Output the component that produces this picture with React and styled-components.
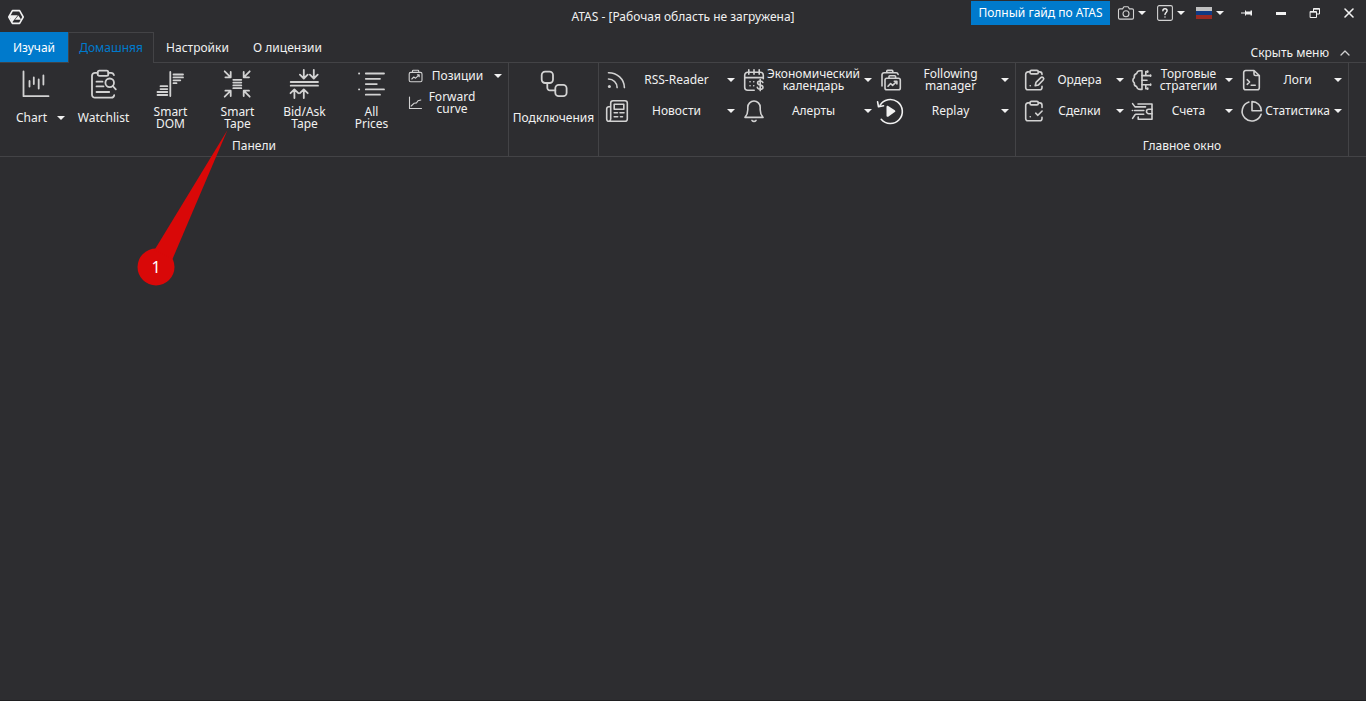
import React from "react";
import styled, { createGlobalStyle, css } from "styled-components";

const GlobalStyle = createGlobalStyle`
  * {
    box-sizing: border-box;
  }

  body {
    margin: 0;
    background: #2d2d30;
  }

  button {
    margin: 0;
    padding: 0;
    border: 0;
    background: none;
    color: inherit;
    font: inherit;
    cursor: pointer;
  }
`;

const Window = styled.div`
  position: relative;
  display: flex;
  flex-direction: column;
  min-height: 100vh;
  color: #f1f1f1;
  background: #2d2d30;
  border-bottom: 1px solid #1f1f21;
  font-family: "Noto Sans", "Open Sans", sans-serif;
  font-size: 12px;
  line-height: 12px;
`;

const TitleBar = styled.header`
  display: grid;
  grid-template-columns: 1fr auto 1fr;
  height: 32px;
`;

const Brand = styled.div`
  display: flex;
  align-items: center;
  padding-left: 8px;
`;

const Title = styled.h1`
  margin: 0;
  font-size: 12px;
  font-weight: 400;
  line-height: 33px;
  white-space: nowrap;
`;

const TitleActions = styled.div`
  display: flex;
  justify-content: flex-end;
  align-items: center;
  height: 26px;
`;

const GuideLink = styled.a`
  width: 139px;
  height: 24px;
  margin-right: 3px;
  color: #fff;
  background: #007acc;
  line-height: 24px;
  text-align: center;
  text-decoration: none;
  white-space: nowrap;
`;

const MenuButton = styled.button`
  display: flex;
  align-items: center;
  gap: 4px;
  width: 34px;
  height: 24px;
  margin-left: 5px;
`;

const WindowButton = styled.button`
  display: flex;
  justify-content: center;
  align-items: center;
  width: 34px;
  height: 24px;
`;

const TabBar = styled.nav`
  display: flex;
  height: 31px;
  border-bottom: 1px solid #434346;
`;

const Tab = styled.button`
  flex: none;
  width: ${(props) => props.$width}px;
  height: 30px;
  padding-top: 2px;
  line-height: 28px;
  text-align: center;
  white-space: nowrap;

  ${(props) =>
    props.$accent &&
    css`
      color: #fff;
      background: #007acc;
    `}

  ${(props) =>
    props.$active &&
    css`
      height: 31px;
      padding-top: 0;
      color: #007acc;
      background: #2d2d30;
      border: 1px solid #434346;
      border-bottom: 0;
    `}
`;

const HideMenu = styled.button`
  display: flex;
  align-items: center;
  gap: 11px;
  height: 16px;
  margin: 13px 16px 0 auto;
  white-space: nowrap;
`;

const Ribbon = styled.div`
  display: flex;
  height: 94px;
  border-bottom: 1px solid #434346;
`;

const Group = styled.section`
  display: flex;
  flex-direction: column;
  flex: none;
  width: ${(props) => props.$width}px;
  border-right: 1px solid #434346;
`;

const GroupBody = styled.div`
  display: flex;
  flex: 1;
  padding-left: ${(props) => props.$inset || 0}px;
`;

const GroupCaption = styled.div`
  height: 20px;
  line-height: 20px;
  text-align: center;
`;

const LargeButton = styled.button`
  display: flex;
  flex-direction: column;
  align-items: center;
  flex: none;
  width: ${(props) => props.$width || 67}px;
  height: 69px;
  padding-top: 6px;
`;

const LargeLabel = styled.span`
  display: flex;
  justify-content: center;
  align-items: center;
  gap: 10px;
  height: 24px;
  margin-top: 7px;
  padding-left: ${(props) => (props.$menu ? 8 : 0)}px;
  white-space: pre;
`;

const SmallStack = styled.div`
  display: flex;
  flex-direction: column;
  flex: 1;
  padding-top: 4px;
`;

const SmallRow = styled.button`
  display: grid;
  grid-template-columns: 16px ${(props) => props.$label}px 14px;
  justify-items: center;
  align-items: center;
  height: ${(props) => props.$height}px;
  padding-left: 3px;
`;

const CommandGrid = styled.div`
  display: grid;
  grid-template-columns: repeat(3, ${(props) => props.$column}px);
  grid-auto-rows: 31px;
  padding-top: 1px;
`;

const Command = styled.button`
  display: grid;
  grid-template-columns: 28px minmax(0, 1fr) 18px;
  justify-items: center;
  align-items: center;
`;

const Label = styled.span`
  display: flex;
  justify-content: center;
  width: 100%;
  text-align: center;
  white-space: pre;
`;

const Workspace = styled.main`
  flex: 1;
`;

const Callout = styled.div`
  position: absolute;
  left: 137px;
  top: 130px;
  width: 91px;
  height: 156px;
  pointer-events: none;

  svg {
    display: block;
  }
`;

const CalloutNumber = styled.span`
  position: absolute;
  left: 0;
  bottom: 0;
  width: 38px;
  color: #fff;
  font-size: 16px;
  line-height: 38px;
  text-align: center;
`;

const Drawing = styled.svg.attrs({ "aria-hidden": true })`
  display: block;
  flex: none;
  overflow: visible;
  fill: none;
  stroke: #d2d2d2;
  stroke-width: ${(props) => props.$stroke || 1.6};
  stroke-linecap: round;
  stroke-linejoin: round;
`;

const Caret = () => (
  <Drawing width="8" height="4" viewBox="0 0 8 4">
    <path d="M0 0h8L4 4z" fill="#f1f1f1" stroke="none" />
  </Drawing>
);

const Large = ({ children }) => (
  <Drawing width="29" height="30" viewBox="0 0 29 30" $stroke={1.8}>
    {children}
  </Drawing>
);

const Medium = ({ children }) => (
  <Drawing width="24" height="24" viewBox="0 0 24 24">
    {children}
  </Drawing>
);

const Small = ({ children }) => (
  <Drawing width="16" height="16" viewBox="0 0 16 16" $stroke={1.1}>
    {children}
  </Drawing>
);

const ChartIcon = () => (
  <Large>
    <path d="M1.5 2.5v24.7h25" />
    <path d="M7.5 12v5.5M11.8 8.5v6.5M16.7 10.5v9M21.4 6.5v9" />
  </Large>
);

const WatchlistIcon = () => (
  <Large>
    <rect x="8.7" y="1.6" width="10.6" height="5.2" rx="1.6" />
    <path d="M8.7 3.8H6a3 3 0 0 0-3 3v18.9a3 3 0 0 0 3 3h16.2a3 3 0 0 0 3-2.6M19.3 3.8h2.6a3 3 0 0 1 3 2.3" />
    <path d="M7.5 12.7h6M7.5 17.4h7M7.5 23h12.7" />
    <circle cx="20.7" cy="13.8" r="4.3" />
    <path d="M23.8 17l3 3.3" />
  </Large>
);

const SmartDomIcon = () => (
  <Large>
    <path d="M14.3 3v24M17.5 5.5H27M17.5 8.4H27M17.5 11.3h6.8M17.5 14.2h3M4.5 17.2h6.8M4.5 20.1h6.8M1.5 23h9.8M1.5 26h9.8" />
  </Large>
);

const SmartTapeIcon = () => (
  <Large>
    <path d="M1.7 2.3l6 6M7.7 3v5.3H2.4M26.7 2.3l-6 6M20.7 3v5.3H26M1.7 27.7l6-6M7.7 27v-5.3H2.4M26.7 27.7l-6-6M20.7 27v-5.3H26" />
    <path d="M10.3 10.8h8M10.3 13.6h8M10.3 16.4h8M10.3 19.2h8" />
  </Large>
);

const BidAskIcon = () => (
  <Large>
    <path d="M.7 13h27.3M.7 16.7h27.3" />
    <path d="M13.8.8v8.6M9.9 5.7l3.9 3.8 3.9-3.8M23.8.8v8.6M19.9 5.7l3.9 3.8 3.9-3.8" />
    <path d="M4.4 29v-8.6M.5 24.2l3.9-3.8 3.9 3.8M13.8 29v-8.6M9.9 24.2l3.9-3.8 3.9 3.8" />
  </Large>
);

const AllPricesIcon = () => (
  <Large>
    <path d="M2 4.5h.2M2 20.4h.2M8.8 4.5H27M8.8 9.8H23M8.8 15.1h11M8.8 20.4H27M8.8 25.7H23" />
  </Large>
);

const ConnectionsIcon = () => (
  <Large>
    <rect x="2.7" y="2.7" width="11.3" height="11.3" rx="3.4" />
    <rect x="16.3" y="15.8" width="11.3" height="11.3" rx="3.4" />
    <path d="M8.3 14v4.8a2.6 2.6 0 0 0 2.6 2.6h5.4" />
  </Large>
);

const PositionsIcon = () => (
  <Small>
    <rect x="1.2" y="4.4" width="12.8" height="9.3" rx="1.5" />
    <path d="M4.5 4.2V2.9c0-.4.3-.6.7-.6h4.8c.4 0 .7.2.7.6v1.3M3.8 11l2-2 1.8 1.2 3.5-3.3M11.2 8.7V6.8H9.4" />
  </Small>
);

const ForwardCurveIcon = () => (
  <Small>
    <path d="M1.5 2v11.5h12M3.2 11l3-2.8 2.3-.3L10 5.8l2.8-.8" />
  </Small>
);

const RssIcon = () => (
  <Medium>
    <circle cx="4.4" cy="18.6" r="1.5" fill="#d2d2d2" stroke="none" />
    <path d="M3.5 11a8.6 8.6 0 0 1 8.6 8.6M3.5 4.7c8.6 0 15.7 6.3 15.9 14.9" />
  </Medium>
);

const NewsIcon = () => (
  <Medium>
    <path d="M5.7 19.7V4a2.3 2.3 0 0 1 2.3-2.3h12A2.3 2.3 0 0 1 22.3 4v16a2.3 2.3 0 0 1-2.3 2.3H4A2.3 2.3 0 0 1 1.7 20V9.8a2 2 0 0 1 2-2h1.8M5.7 19.7c0 1.5-.6 2.4-1.7 2.6" />
    <rect x="9.2" y="5.3" width="9.6" height="4.9" />
    <path d="M9.2 13.8h3.3M15 13.8h4M9.2 17.8h3.5M15.5 17.8h2" />
  </Medium>
);

const CalendarIcon = () => (
  <Medium>
    <path d="M12.2 22.2H5.7a3 3 0 0 1-3-3v-12a3 3 0 0 1 3-3h12.6a3 3 0 0 1 3 3v3.6M2.7 9.6h18.6M6.8 1.7v4.6M12 1.7v4.6M17.2 1.7v4.6" />
    <path d="M8 13.8h.1M11.7 13.8h.1M8 17.8h.1M11.7 17.8h.1" />
    <path d="M20.8 14.4c-.3-.9-1.4-1.4-2.7-1.4-1.5 0-2.5.8-2.5 2 0 2.9 5.4 1.3 5.4 4.2 0 1.2-1.1 2-2.7 2s-2.7-.6-3-1.8M18.2 11.6v11" />
  </Medium>
);

const BellIcon = () => (
  <Medium>
    <path d="M3 18.4c1.8-2 2.8-4.4 2.8-7.6V8.2a6.2 6.2 0 0 1 12.4 0v2.6c0 3.2 1 5.6 2.8 7.6z" />
    <path d="M10 21.4a2.6 2.6 0 0 0 4 0" />
  </Medium>
);

const FollowingIcon = () => (
  <Medium>
    <path d="M3 18V6.8a2 2 0 0 1 2-2h12.2a2 2 0 0 1 1.9 1.6M7.8 4.5V3.3c0-.5.3-.9.8-.9H13c.5 0 .8.4.8.9v1.2" />
    <rect x="6" y="10.3" width="15.3" height="11.5" rx="1.8" />
    <path d="M10 10V8.6c0-.5.3-.8.8-.8h5c.5 0 .8.3.8.8V10M9 18.2l2.6-2.7 2 1.8 4.2-4M17.9 16v-2.8h-2.6" />
  </Medium>
);

const ReplayIcon = () => (
  <Medium>
    <path d="M2.2 20.3A12 12 0 1 0 1 6.4" stroke="#f1f1f1" />
    <path d="M-1.4 2.8l.9 5 5-1.1" stroke="#f1f1f1" />
    <path d="M7.5 8c0-.9.9-1.4 1.7-1l6.6 4.3c.7.5.7 1.3 0 1.8L9.2 17.7c-.8.4-1.7 0-1.7-.9z" fill="#f1f1f1" stroke="none" />
  </Medium>
);

const OrdersIcon = () => (
  <Medium>
    <rect x="8" y="2.4" width="8.3" height="3.5" rx="1.4" />
    <path d="M8 3.9H6a2.3 2.3 0 0 0-2.3 2.3v13.2a2.3 2.3 0 0 0 2.3 2.3h11.7a2.3 2.3 0 0 0 2.3-2.3v-1.2M16.3 3.9h1.4A2.3 2.3 0 0 1 20 6.2v.3M8.2 17.7h.1" />
    <path d="M13.2 17.8l.8-3.4 4.8-4.8a1.6 1.6 0 0 1 2.4 2.4l-4.7 4.9z" />
  </Medium>
);

const DealsIcon = () => (
  <Medium>
    <rect x="8" y="2.4" width="8.3" height="3.5" rx="1.4" />
    <path d="M8 3.9H6a2.3 2.3 0 0 0-2.3 2.3v13.2a2.3 2.3 0 0 0 2.3 2.3h11.7a2.3 2.3 0 0 0 2.3-2.3v-1.2M16.3 3.9h1.4A2.3 2.3 0 0 1 20 6.2v2.3M8.2 17.7h.1" />
    <path d="M13.7 14.2l2.2 2.1 4.2-4.3" />
  </Medium>
);

const StrategiesIcon = () => (
  <Medium>
    <path d="M11 2.8H9.2C7.400 2.8 6 4 5.600 5.600 3.800 6.200 3 8 3.300 9.600 1.400 11 1.400 13.400 3.300 14.800 3 16.600 3.800 18 5.600 18.600 6 20.200 7.400 21.400 9.200 21.400H11z" />
    <path d="M11 7.6h8.5M14.8 7.600V3.600h1.700M11 12.200h5M11 16.700h8.500M14.800 16.700v4h1.700" />
    <path d="M19.600 7v1.200M16.700 3v1.200M19.600 16.100v1.200M16.700 20.100v1.200" />
  </Medium>
);

const AccountsIcon = () => (
  <Medium>
    <path d="M7 5h14v15.300H7.200V18" />
    <path d="M1.6 4.600L4 7.900h10.500M3.500 11.500h9.300M1.400 11.500h.1M4.700 15.300h8M1.600 19.400l2.600-3.900" />
    <path d="M21 10.300h-3.300a2.200 2.200 0 0 0 0 4.400H21" />
  </Medium>
);

const LogsIcon = () => (
  <Medium>
    <path d="M14 2.5H5.7a2 2 0 0 0-2 2v15.2a2 2 0 0 0 2 2h11.6a2 2 0 0 0 2-2V7.5zM14 2.7v3.4c0 .8.6 1.4 1.4 1.4h3.7" />
    <path d="M7.2 11.7l2.4 2.3-2.4 2.3M11.2 17.3h4" />
  </Medium>
);

const StatisticsIcon = () => (
  <Medium>
    <path d="M8.9 3a9.7 9.7 0 1 0 12.2 12.2" />
    <path d="M12 2.6v9.1h9.4A9.3 9.3 0 0 0 12 2.6z" />
  </Medium>
);

const LogoIcon = () => (
  <Drawing width="16" height="16" viewBox="0 0 16 16">
    <path d="M4.4 1.6h7.2L15.2 8l-3.6 6.4H4.4L.8 8z" stroke="#f1f1f1" />
    <path d="M1 6.2h8.8L4 13.6z" fill="#f1f1f1" stroke="none" />
    <path d="M10.4 6.4l2.8 4.4H7z" fill="#f1f1f1" stroke="none" />
  </Drawing>
);

const CameraIcon = () => (
  <Drawing width="16" height="14" viewBox="0 0 16 14" $stroke={1.1}>
    <path d="M1.8 2.9h2.8L5.9.8h4.2l1.3 2.1h2.8c.7 0 1.3.5 1.3 1.2v7.7c0 .8-.6 1.3-1.3 1.3H1.8c-.7 0-1.3-.5-1.3-1.3V4.1c0-.7.6-1.2 1.3-1.2z" />
    <circle cx="8" cy="7.7" r="3" />
  </Drawing>
);

const HelpIcon = () => (
  <Drawing width="16" height="16" viewBox="0 0 16 16" $stroke={1.1}>
    <rect x=".6" y=".6" width="14.8" height="14.8" rx="1.6" />
    <path d="M5.9 5.8c0-1.3.9-2 2.1-2s2.1.8 2.1 1.9C10.1 7.4 8 7.5 8 9.6M8 11.9v.1" stroke="#f1f1f1" strokeWidth="1.4" />
  </Drawing>
);

const FlagIcon = () => (
  <Drawing width="16" height="12" viewBox="0 0 16 12">
    <path d="M0 0h16v4H0z" fill="#c0c0c0" stroke="none" />
    <path d="M0 4h16v4H0z" fill="#103a84" stroke="none" />
    <path d="M0 8h16v4H0z" fill="#9b2a22" stroke="none" />
  </Drawing>
);

const PinIcon = () => (
  <Drawing width="12" height="8" viewBox="0 0 12 8">
    <path d="M0 3.5h4V1.500h1v1h4.500v-1H11v5H9.500v-1H5v1H4v-2H0z" fill="#f1f1f1" stroke="none" />
  </Drawing>
);

const MinimizeIcon = () => (
  <Drawing width="10" height="3" viewBox="0 0 10 3">
    <path d="M0 0h10v3H0z" fill="#f1f1f1" stroke="none" />
  </Drawing>
);

const RestoreIcon = () => (
  <Drawing width="10" height="10" viewBox="0 0 10 10" $stroke={1}>
    <path d="M3.5 3.5v-3h6V6h-3M3.5 1.2h6M.5 3.5h6v6h-6zM.5 4.2h6" stroke="#f1f1f1" strokeLinejoin="miter" />
  </Drawing>
);

const CloseIcon = () => (
  <Drawing width="10" height="10" viewBox="0 0 10 10">
    <path d="M1 1l8 8M9 1L1 9" stroke="#f1f1f1" />
  </Drawing>
);

const ChevronUpIcon = () => (
  <Drawing width="10" height="6" viewBox="0 0 10 6" $stroke={1.3}>
    <path d="M1 5l4-4 4 4" />
  </Drawing>
);

const panels = [
  { label: "Chart", icon: ChartIcon, menu: true },
  { label: "Watchlist", icon: WatchlistIcon },
  { label: "Smart\nDOM", icon: SmartDomIcon },
  { label: "Smart\nTape", icon: SmartTapeIcon },
  { label: "Bid/Ask\nTape", icon: BidAskIcon },
  { label: "All\nPrices", icon: AllPricesIcon },
];

const tools = [
  { label: "RSS-Reader", icon: RssIcon },
  { label: "Экономический\nкалендарь", icon: CalendarIcon },
  { label: "Following\nmanager", icon: FollowingIcon },
  { label: "Новости", icon: NewsIcon },
  { label: "Алерты", icon: BellIcon },
  { label: "Replay", icon: ReplayIcon },
];

const mainWindow = [
  { label: "Ордера", icon: OrdersIcon },
  { label: "Торговые\nстратегии", icon: StrategiesIcon },
  { label: "Логи", icon: LogsIcon },
  { label: "Сделки", icon: DealsIcon },
  { label: "Счета", icon: AccountsIcon },
  { label: "Статистика", icon: StatisticsIcon },
];

const Commands = ({ items, column }) => (
  <CommandGrid $column={column}>
    {items.map(({ label, icon: Icon }) => (
      <Command key={label} type="button">
        <Icon />
        <Label>{label}</Label>
        <Caret />
      </Command>
    ))}
  </CommandGrid>
);

const App = () => {
  return (
    <>
      <GlobalStyle />
      <Window>
        <TitleBar>
          <Brand>
            <LogoIcon />
          </Brand>
          <Title>ATAS - [Рабочая область не загружена]</Title>
          <TitleActions>
            <GuideLink href="#guide">Полный гайд по ATAS</GuideLink>
            <MenuButton type="button">
              <CameraIcon />
              <Caret />
            </MenuButton>
            <MenuButton type="button">
              <HelpIcon />
              <Caret />
            </MenuButton>
            <MenuButton type="button">
              <FlagIcon />
              <Caret />
            </MenuButton>
            <WindowButton type="button">
              <PinIcon />
            </WindowButton>
            <WindowButton type="button">
              <MinimizeIcon />
            </WindowButton>
            <WindowButton type="button">
              <RestoreIcon />
            </WindowButton>
            <WindowButton type="button">
              <CloseIcon />
            </WindowButton>
          </TitleActions>
        </TitleBar>

        <TabBar>
          <Tab type="button" $width={68} $accent>Изучай</Tab>
          <Tab type="button" $width={86} $active>Домашняя</Tab>
          <Tab type="button" $width={87}>Настройки</Tab>
          <Tab type="button" $width={93}>О лицензии</Tab>
          <HideMenu type="button">
            Скрыть меню
            <ChevronUpIcon />
          </HideMenu>
        </TabBar>

        <Ribbon>
          <Group $width={509}>
            <GroupBody $inset={3}>
              {panels.map(({ label, icon: Icon, menu }) => (
                <LargeButton key={label} type="button">
                  <Icon />
                  <LargeLabel $menu={menu}>
                    {label}
                    {menu && <Caret />}
                  </LargeLabel>
                </LargeButton>
              ))}
              <SmallStack>
                <SmallRow type="button" $height={18} $label={67}>
                  <PositionsIcon />
                  <Label>Позиции</Label>
                  <Caret />
                </SmallRow>
                <SmallRow type="button" $height={36} $label={56}>
                  <ForwardCurveIcon />
                  <Label>{"Forward\ncurve"}</Label>
                </SmallRow>
              </SmallStack>
            </GroupBody>
            <GroupCaption>Панели</GroupCaption>
          </Group>

          <Group $width={90}>
            <GroupBody>
              <LargeButton type="button" $width={89}>
                <ConnectionsIcon />
                <LargeLabel>Подключения</LargeLabel>
              </LargeButton>
            </GroupBody>
          </Group>

          <Group $width={417}>
            <GroupBody $inset={4}>
              <Commands items={tools} column={137} />
            </GroupBody>
          </Group>

          <Group $width={333}>
            <GroupBody $inset={4}>
              <Commands items={mainWindow} column={109} />
            </GroupBody>
            <GroupCaption>Главное окно</GroupCaption>
          </Group>
        </Ribbon>

        <Workspace />

        <Callout>
          <svg width="91" height="156" viewBox="0 0 91 156" fill="#d90808" aria-hidden="true">
            <circle cx="19" cy="137" r="18.5" />
            <path d="M90.5 0L17.5 120l18 9z" />
          </svg>
          <CalloutNumber>1</CalloutNumber>
        </Callout>
      </Window>
    </>
  );
};

export default App;
